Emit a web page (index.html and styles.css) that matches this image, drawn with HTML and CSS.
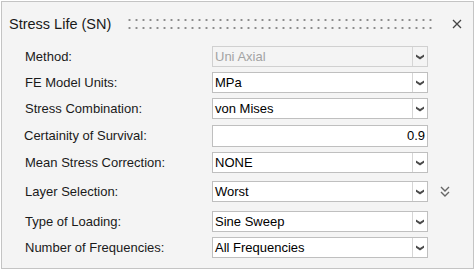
FILE: index.html
```html
<!DOCTYPE html>
<html lang="en">

<head>
    <meta charset="UTF-8">
    <meta name="viewport" content="width=device-width, initial-scale=1.0">
    <title>Stress Life (SN)</title>
    <link rel="stylesheet" href="styles.css">
</head>

<body>
    <div class="panel">
        <div class="header">
            <div class="title">Stress Life (SN)</div>
            <div class="grip"></div>
            <div class="close">
                <svg width="10" height="10" viewBox="0 0 10 10">
                    <path d="M1 1 L9 9 M9 1 L1 9" stroke="#444" stroke-width="1.3" fill="none" />
                </svg>
            </div>
        </div>
        <div class="form">
            <div class="row">
                <div class="label">Method:</div>
                <div class="field disabled">
                    <div class="value">Uni Axial</div>
                    <div class="arrow"><svg width="8" height="6" viewBox="0 0 8 6"><path d="M0 0.5 L4 3 L8 0.5 L8 2.8 L4 5.5 L0 2.8 Z" fill="#4a4a4a" /></svg></div>
                </div>
            </div>
            <div class="row">
                <div class="label">FE Model Units:</div>
                <div class="field">
                    <div class="value">MPa</div>
                    <div class="arrow"><svg width="8" height="6" viewBox="0 0 8 6"><path d="M0 0.5 L4 3 L8 0.5 L8 2.8 L4 5.5 L0 2.8 Z" fill="#4a4a4a" /></svg></div>
                </div>
            </div>
            <div class="row">
                <div class="label">Stress Combination:</div>
                <div class="field">
                    <div class="value">von Mises</div>
                    <div class="arrow"><svg width="8" height="6" viewBox="0 0 8 6"><path d="M0 0.5 L4 3 L8 0.5 L8 2.8 L4 5.5 L0 2.8 Z" fill="#4a4a4a" /></svg></div>
                </div>
            </div>
            <div class="row mt6">
                <div class="label shift">Certainity of Survival:</div>
                <div class="field tall">
                    <div class="value num">0.9</div>
                </div>
            </div>
            <div class="row mt6">
                <div class="label">Mean Stress Correction:</div>
                <div class="field">
                    <div class="value">NONE</div>
                    <div class="arrow"><svg width="8" height="6" viewBox="0 0 8 6"><path d="M0 0.5 L4 3 L8 0.5 L8 2.8 L4 5.5 L0 2.8 Z" fill="#4a4a4a" /></svg></div>
                </div>
            </div>
            <div class="row mt8">
                <div class="label">Layer Selection:</div>
                <div class="field">
                    <div class="value">Worst</div>
                    <div class="arrow"><svg width="8" height="6" viewBox="0 0 8 6"><path d="M0 0.5 L4 3 L8 0.5 L8 2.8 L4 5.5 L0 2.8 Z" fill="#4a4a4a" /></svg></div>
                </div>
                <div class="more">
                    <svg width="10" height="12" viewBox="0 0 10 12">
                        <path d="M1 1 L5 5 L9 1 M1 6 L5 10 L9 6" stroke="#666" stroke-width="1.4" fill="none" />
                    </svg>
                </div>
            </div>
            <div class="row mt9">
                <div class="label">Type of Loading:</div>
                <div class="field">
                    <div class="value">Sine Sweep</div>
                    <div class="arrow"><svg width="8" height="6" viewBox="0 0 8 6"><path d="M0 0.5 L4 3 L8 0.5 L8 2.8 L4 5.5 L0 2.8 Z" fill="#4a4a4a" /></svg></div>
                </div>
            </div>
            <div class="row">
                <div class="label">Number of Frequencies:</div>
                <div class="field">
                    <div class="value">All Frequencies</div>
                    <div class="arrow"><svg width="8" height="6" viewBox="0 0 8 6"><path d="M0 0.5 L4 3 L8 0.5 L8 2.8 L4 5.5 L0 2.8 Z" fill="#4a4a4a" /></svg></div>
                </div>
            </div>
        </div>
    </div>
</body>

</html>
```

FILE: styles.css
```css
* {
    padding: 0;
    margin: 0;
    box-sizing: border-box;
}

body {
    background-color: #ffffff;
    font-family: "Liberation Sans", Arial, sans-serif;
    color: #1a1a1a;
}

.panel {
    margin: 1px;
    width: 473px;
    height: 268px;
    border: 1px solid #c4c4c4;
    background-color: #f4f4f4;
}

.header {
    display: flex;
    align-items: center;
    height: 43px;
    padding: 0 11px 0 7px;
}

.title {
    font-size: 14.5px;
    color: #1a1a1a;
    white-space: nowrap;
}

.grip {
    margin-left: 15px;
    width: 308px;
    height: 16px;
    /* two rows of small dots */
    background-image: radial-gradient(circle, #8c8c8c 0.9px, transparent 1.3px);
    background-size: 7px 8px;
}

.close {
    margin-left: auto;
    display: flex;
}

.form {
    display: flex;
    flex-direction: column;
    gap: 5px;
    padding-left: 23px;
    margin-top: 1px;
}

.row {
    display: flex;
    align-items: center;
    height: 21px;
}

.mt6 {
    margin-top: 1px;
}

.mt8 {
    margin-top: 3px;
}

.mt9 {
    margin-top: 4px;
}

.label {
    width: 187px;
    font-size: 13px;
    color: #1a1a1a;
    white-space: nowrap;
}

.shift {
    margin-left: -1px;
    width: 188px;
}

.field {
    display: flex;
    width: 216px;
    height: 21px;
    border: 1px solid #bfbfbf;
    background-color: #fff;
    font-size: 13px;
    color: #000;
}

.field.tall {
    height: 22px;
}

.value {
    flex: 1;
    padding-left: 2px;
    line-height: 19px;
    white-space: nowrap;
}

.value.num {
    text-align: right;
    padding-right: 2px;
}

.arrow {
    width: 15px;
    border-left: 1px solid #d6d6d6;
    display: flex;
    align-items: center;
    justify-content: center;
}

.field.disabled {
    background-color: #f4f4f4;
    border-color: #d0d0d0;
    color: #a3a3a3;
}

.more {
    margin-left: 12px;
    display: flex;
}
```
